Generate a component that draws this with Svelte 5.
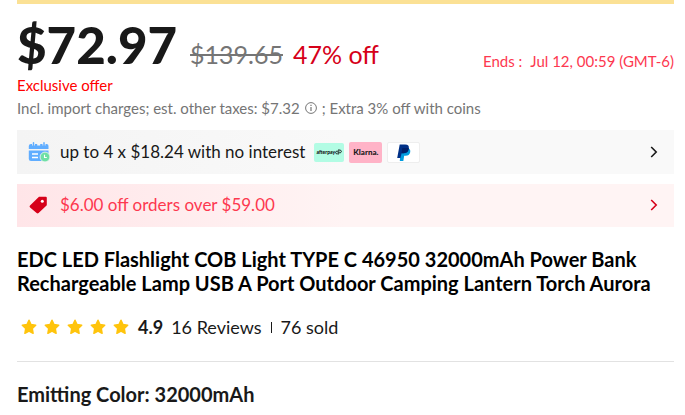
<script>
  const stars = [1, 2, 3, 4, 5];
</script>

{#snippet chevron()}
  <svg class="chevron" viewBox="0 0 8 12" aria-hidden="true">
    <path d="M1.2 1 6.2 6 1.2 11" fill="none" stroke="currentColor" stroke-width="1.6" />
  </svg>
{/snippet}

<main>
  <div class="promo-edge"></div>

  <section class="pricing">
    <div class="price-row">
      <strong class="price">$72.97</strong>
      <del>$139.65</del>
      <span class="discount">47% off</span>
      <span class="ends"><span>Ends :</span><time>Jul 12, 00:59 (GMT-6)</time></span>
    </div>
    <p class="exclusive">Exclusive offer</p>
    <p class="charges">
      <span>Incl. import charges; est. other taxes: $7.32</span>
      <svg class="info" viewBox="0 0 12 12" aria-hidden="true">
        <circle cx="6" cy="6" r="5.4" fill="none" stroke="currentColor" />
        <path d="M6 5v4M6 2.700v1.300" fill="none" stroke="currentColor" stroke-width="1.200" />
      </svg>
      <span>; Extra 3% off with coins</span>
    </p>
  </section>

  <button class="offer installments" type="button">
    <svg class="offer-icon" viewBox="0 0 22 20" aria-hidden="true">
      <path d="M3 2h15.500q2 0 2 2v3H.8V4q0-2 2.200-2z" fill="#60adff" />
      <path d="M.8 8.500h19.700V17q0 2-2 2H3q-2.200 0-2.200-2z" fill="#60adff" />
      <path d="M5.500 0v3.500M10.700 0v3.500M16 0v3.500" stroke="#f5f5f5" stroke-width="3" />
      <path d="M5.500 .8v3M16 .8v3" stroke="#60adff" stroke-width="1.500" stroke-linecap="round" />
      <path d="M4 12h6M4 15.500h6" stroke="#fff" stroke-width="1.500" />
      <circle cx="17" cy="15" r="4.900" fill="#6fe0a5" stroke="#f5f5f5" stroke-width=".8" />
      <path d="M16.500 12.800v2.700h2.300" fill="none" stroke="#fff" stroke-width="1.100" />
    </svg>
    <span>up to 4 x $18.24 with no interest</span>
    <span class="brands">
      <span class="brand afterpay">afterpay<svg viewBox="0 0 7 6" aria-hidden="true"><path d="M2.500 4.800H1.300L.6 3.500l.8-1.300h2M4.300 1.100h1.200l.9 1.300-.9 1.400h-2M3.800 .3v2.500M3.200 3v2.600" fill="none" stroke="currentColor" stroke-width=".9" /></svg></span>
      <span class="brand klarna">Klarna.</span>
      <span class="brand paypal">
        <svg viewBox="0 0 14 17" role="img" aria-label="PayPal">
          <path d="M4 4h7q2.800 1.200 2.200 4.300-.8 3.500-4.600 3.500H7.200L6.300 17H2.800z" fill="#009cde" />
          <path d="M2.700.5h5.500q4.300 0 3.600 4.200-.8 4.500-5.400 4.500H4.600L3.500 14H.2z" fill="#003087" />
          <path d="M5.300 4h6.500q-.1 5.200-5.400 5.200H4.600z" fill="#012169" />
        </svg>
      </span>
    </span>
    {@render chevron()}
  </button>

  <button class="offer coupon" type="button">
    <svg class="offer-icon" viewBox="0 0 22 20" aria-hidden="true">
      <path d="M11 1.800h6.800q1 0 1 1v7.500L10.600 18q-1 .9-2 0L2.100 12.600q-1.100-1-.1-2z" fill="#d60019" />
      <circle cx="14.300" cy="6.200" r="1.500" fill="#fff" />
    </svg>
    <span>$6.00 off orders over $59.00</span>
    {@render chevron()}
  </button>

  <h1>EDC LED Flashlight COB Light TYPE C 46950 32000mAh Power Bank Rechargeable Lamp USB A Port Outdoor Camping Lantern Torch Aurora</h1>

  <div class="reviews">
    <span class="stars" role="img" aria-label="4.9 out of 5 stars">
      {#each stars as star (star)}
        <svg viewBox="0 0 16 16" aria-hidden="true">
          <path d="M8 1.300 10 5.600 14.700 6.200 11.300 9.500 12.100 14.300 8 12.200 3.900 14.300 4.700 9.500 1.300 6.200 6 5.600z" fill="#ffc40c" stroke="#ffc40c" stroke-width="1.500" stroke-linejoin="round" />
        </svg>
      {/each}
    </span>
    <strong>4.9</strong>
    <a href="#reviews">16 Reviews</a>
    <span class="separator"></span>
    <span>76 sold</span>
  </div>

  <section class="variant">
    <h2>Emitting Color: 32000mAh</h2>
  </section>
</main>

<style>
  :global(body) {
    margin: 0;
    background: #fff;
  }
  main {
    padding: 0 11px 0 17px;
    color: #191919;
    font: 18px/24px Lato, "Open Sans", sans-serif;
  }
  .promo-edge {
    height: 4px;
    background: #fbe195;
  }
  .pricing {
    padding-top: 15px;
  }
  .price-row {
    display: flex;
    align-items: baseline;
    line-height: 24px;
  }
  .price {
    font-size: 51px;
    font-weight: 900;
    line-height: 52px;
  }
  del {
    margin-left: 13px;
    color: #757575;
    font-size: 25px;
  }
  .discount {
    margin-left: 10px;
    color: #d60019;
    font-size: 25px;
  }
  .ends {
    display: flex;
    align-self: flex-end;
    gap: 8px;
    margin-left: auto;
    color: #fd384f;
    font-size: 15px;
    line-height: 20px;
    white-space: nowrap;
  }
  p {
    margin: 0;
    font-size: 15px;
    line-height: 20px;
  }
  .exclusive {
    margin-top: 4px;
    color: #f00;
  }
  .charges {
    display: flex;
    align-items: center;
    gap: 5px;
    margin-top: 3px;
    color: #757575;
  }
  .info {
    width: 12px;
    height: 12px;
  }
  .offer {
    display: flex;
    align-items: center;
    box-sizing: border-box;
    width: 100%;
    min-height: 44px;
    margin: 12px 0 0;
    padding: 0 16px 0 11px;
    border: 0;
    color: inherit;
    font: inherit;
    font-size: 17px;
    text-align: left;
    cursor: pointer;
  }
  .installments {
    background: linear-gradient(90deg, #f4f4f4, #f9f9f9 50%);
  }
  .coupon {
    min-height: 43px;
    margin-top: 10px;
    padding-bottom: 2px;
    background: linear-gradient(90deg, #ffe5e8, #fff4f4 50%);
    color: #fd384f;
  }
  .offer-icon {
    flex: none;
    width: 22px;
    height: 20px;
    margin-right: 10px;
  }
  .chevron {
    width: 8px;
    height: 12px;
    margin-left: auto;
  }
  .coupon .chevron {
    color: #d60019;
  }
  .brands {
    display: flex;
    align-items: center;
    gap: 5px;
    margin-left: 9px;
  }
  .brand {
    display: flex;
    align-items: center;
    justify-content: center;
    box-sizing: border-box;
    width: 33px;
    height: 21px;
    border-radius: 2px;
  }
  .afterpay {
    width: 30px;
    height: 19px;
    background: #b2fce4;
    color: #111;
    font-size: 5px;
    font-weight: 900;
  }
  .afterpay svg {
    flex: none;
    width: 7px;
    height: 6px;
  }
  .klarna {
    background: #ffb3c7;
    font-size: 8px;
    font-weight: 900;
  }
  .paypal {
    border: 1px solid #eee;
    background: #fff;
  }
  .paypal svg {
    width: 14px;
    height: 17px;
  }
  h1,
  h2 {
    margin: 0;
    font-size: 20px;
    font-weight: 700;
    line-height: 24px;
  }
  h1 {
    margin-top: 20px;
    color: #000;
  }
  .reviews {
    display: flex;
    align-items: center;
    margin-top: 20px;
  }
  .stars {
    display: flex;
    gap: 7px;
    margin: 0 9px 0 4px;
  }
  .stars svg {
    width: 16px;
    height: 16px;
  }
  a {
    margin-left: 8px;
    color: inherit;
    text-decoration: none;
  }
  .separator {
    width: 1px;
    height: 11px;
    margin: 0 9px;
    background: #191919;
  }
  .variant {
    margin-top: 22px;
    padding-top: 20px;
    border-top: 1px solid #e2e2e2;
  }
</style>
